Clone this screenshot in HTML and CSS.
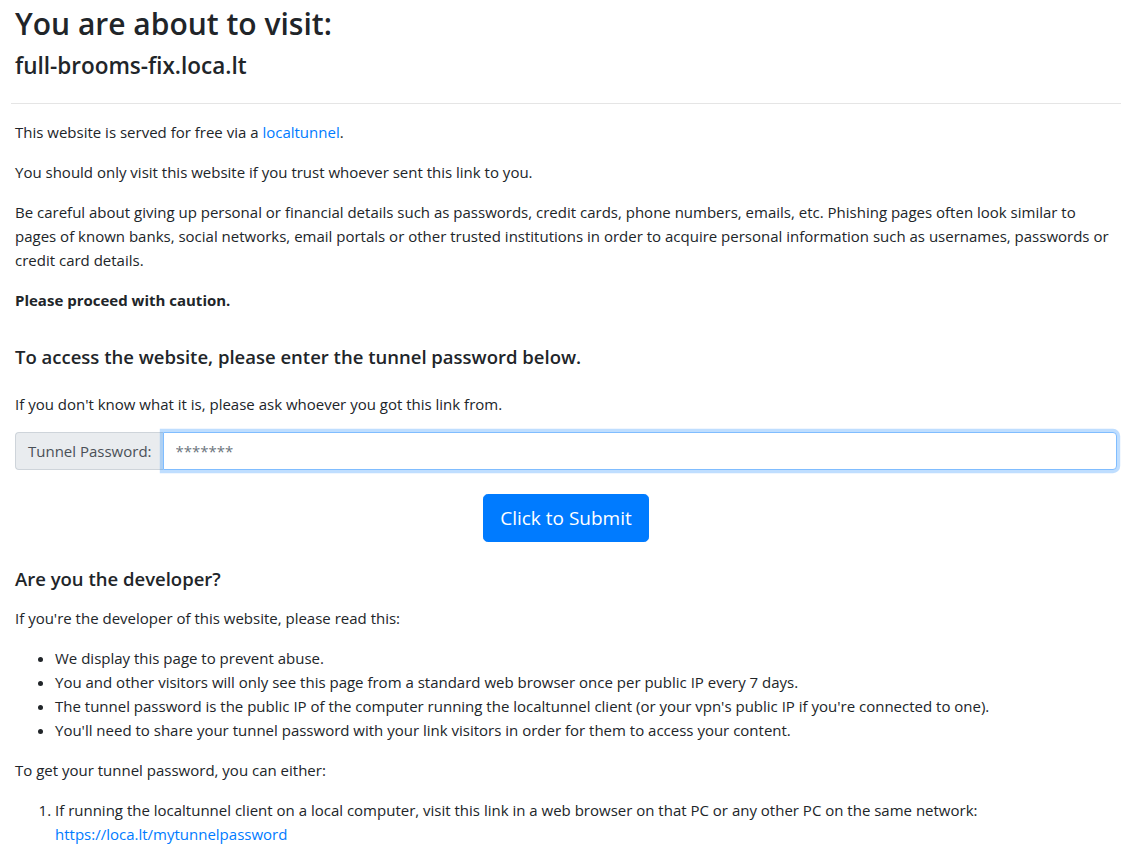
FILE: index.html
```html
<!DOCTYPE html>
<html lang="en">
<head>
<meta charset="utf-8">
<title>localtunnel</title>
<link rel="stylesheet" href="styles.css">
</head>
<body>
<div class="page">
  <header class="head">
    <h2 class="title">You are about to visit:</h2>
    <h4 class="host">full-brooms-fix.loca.lt</h4>
  </header>
  <hr class="rule">
  <main class="content">
    <p>This website is served for free via a <a href="#">localtunnel</a>.</p>
    <p>You should only visit this website if you trust whoever sent this link to you.</p>
    <p>Be careful about giving up personal or financial details such as passwords, credit cards, phone numbers, emails, etc. Phishing pages often look similar to pages of known banks, social networks, email portals or other trusted institutions in order to acquire personal information such as usernames, passwords or credit card details.</p>
    <p><strong>Please proceed with caution.</strong></p>

    <h5 class="sub sub-first">To access the website, please enter the tunnel password below.</h5>
    <p>If you don't know what it is, please ask whoever you got this link from.</p>

    <form class="form">
      <div class="input-group">
        <span class="addon">Tunnel Password:</span>
        <input class="field" type="text" placeholder="*******" autofocus>
      </div>
      <div class="actions">
        <button type="button" class="btn">Click to Submit</button>
      </div>
    </form>

    <h5 class="sub sub-dev">Are you the developer?</h5>
    <p>If you're the developer of this website, please read this:</p>
    <ul class="list">
      <li>We display this page to prevent abuse.</li>
      <li>You and other visitors will only see this page from a standard web browser once per public IP every 7 days.</li>
      <li>The tunnel password is the public IP of the computer running the localtunnel client (or your vpn's public IP if you're connected to one).</li>
      <li>You'll need to share your tunnel password with your link visitors in order for them to access your content.</li>
    </ul>
    <p>To get your tunnel password, you can either:</p>
    <ol class="list">
      <li>If running the localtunnel client on a local computer, visit this link in a web browser on that PC or any other PC on the same network:<br><a href="#">https://loca.lt/mytunnelpassword</a></li>
    </ol>
  </main>
</div>
</body>
</html>
```
FILE: styles.css
```css
html, body {
  margin: 0;
  padding: 0;
  background: #fff;
}
body {
  font-family: "Open Sans", "Noto Sans", "DejaVu Sans", sans-serif;
  font-size: 15px;
  line-height: 24px;
  color: #212529;
}
.page {
  padding: 0 17px 0 11px;
}
.head, .content {
  padding: 0 4px;
}
.title {
  margin: 5px 0 8px;
  font-size: 30px;
  line-height: 38px;
  font-weight: 600;
}
.host {
  margin: 0;
  font-size: 22.5px;
  line-height: 29px;
  font-weight: 600;
}
.rule {
  margin: 23px 0 16px;
  border: 0;
  border-top: 1px solid rgba(0,0,0,.1);
  height: 0;
}
p {
  margin: 0 0 16px;
}
a {
  color: #007bff;
  text-decoration: none;
}
strong {
  font-weight: 700;
}
.sub {
  font-size: 18.5px;
  line-height: 24px;
  font-weight: 600;
}
.sub-first {
  margin: 33px 0 23px;
}
.sub-dev {
  margin: 25px 0 15px;
}
.form {
  margin: 0;
}
.input-group {
  display: flex;
  height: 38px;
}
.addon {
  display: flex;
  align-items: center;
  padding: 0 11px 0 12px;
  background: #e9ecef;
  border: 1px solid #ced4da;
  border-right: 0;
  border-radius: 4px 0 0 4px;
  color: #495057;
  white-space: nowrap;
}
.field {
  flex: 1;
  min-width: 0;
  box-sizing: border-box;
  height: 38px;
  padding: 6px 12px;
  font: inherit;
  color: #495057;
  background: #fff;
  border: 1px solid #80bdff;
  border-radius: 0 4px 4px 0;
  outline: 0;
  box-shadow: 0 0 0 3.2px rgba(0,123,255,.25);
}
.field::placeholder {
  color: #6c757d;
}
.actions {
  display: flex;
  justify-content: center;
  margin-top: 24px;
}
.btn {
  font-family: inherit;
  font-size: 19px;
  line-height: 30px;
  padding: 8px 16px;
  color: #fff;
  background: #007bff;
  border: 1px solid #007bff;
  border-radius: 4.8px;
}
.list {
  margin: 0 0 16px;
  padding-left: 40px;
}
```
